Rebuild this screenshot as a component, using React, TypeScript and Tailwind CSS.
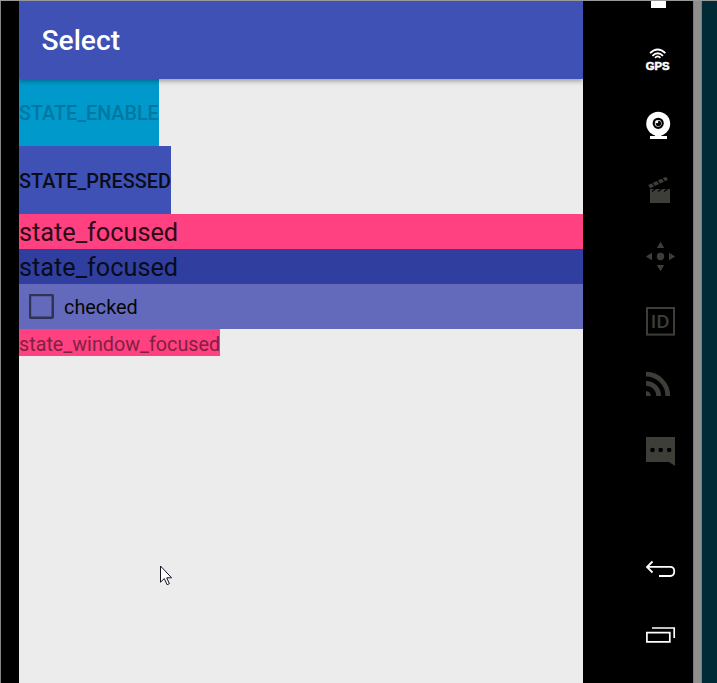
import type { ReactNode } from "react";

function Slot({ y, label, children }: { y: number; label: string; children: ReactNode }) {
  return (
    <button aria-label={label} className="block h-[65px] w-8 shrink-0">
      <svg width="32" height="65" viewBox={`645 ${y} 32 65`} className="block">
        {children}
      </svg>
    </button>
  );
}

function Sidebar() {
  return (
    <aside className="flex w-[110px] shrink-0 flex-col bg-black pl-[62px] text-[#3e3e39]">
      <div className="mb-[20px] ml-[6px] h-[7px] w-[15px] shrink-0 bg-white" />
      <Slot y={28} label="GPS">
        <g fill="none" stroke="#fff" strokeWidth="1.8">
          <path d="M650 53.2 Q657.7 45.8 665.4 53.2" />
          <path d="M652.4 55.8 Q657.7 50.6 663 55.8" />
          <path d="M655 57.8 Q657.7 55 660.4 57.8" />
        </g>
        <text x="645.7" y="70.2" textLength="24" lengthAdjust="spacingAndGlyphs" fill="#fff" stroke="#fff" strokeWidth="0.5" className="font-['Liberation_Sans',sans-serif] text-[10.8px] font-bold">GPS</text>
      </Slot>
      <Slot y={93} label="Camera">
        <circle cx="658.2" cy="123.8" r="12" fill="#fff" />
        <path d="M655 134h6.400v2h5.600v3h-17v-3h5z" fill="#fff" />
        <circle cx="658.2" cy="123.300" r="4.500" fill="#fff" stroke="#000" strokeWidth="2.200" />
        <circle cx="658.4" cy="123.500" r="2.700" fill="#000" />
        <circle cx="657" cy="122" r="1.300" fill="#fff" />
      </Slot>
      <Slot y={158} label="Video capture">
        <path d="M650 189h20v14h-20z" fill="currentColor" />
        <path d="M648.200 185L666 176.700l1.900 3L650.200 188.200z" fill="currentColor" />
        <path d="M651.500 182l3 4M656.500 179.600l3 4M661.500 177.300l3 4M652 191.600l3.500-2.600M658 191.600l3.500-2.600M664 191.600l3.500-2.600" stroke="#000" strokeWidth="1.200" />
      </Slot>
      <Slot y={223} label="Move">
        <g fill="currentColor">
          <circle cx="660.500" cy="256.500" r="3.700" />
          <path d="M660.500 241.700l3.700 6.300h-7.400zM660.500 271.300l3.700-6.300h-7.400zM645.800 256.500l6.200-3.700v7.400zM675.200 256.500l-6.200-3.700v7.400z" />
        </g>
      </Slot>
      <Slot y={288} label="Identifiers">
        <rect x="647" y="308" width="27" height="26.600" fill="none" stroke="currentColor" strokeWidth="2" />
        <text x="650.7" y="328" textLength="18.800" lengthAdjust="spacingAndGlyphs" fill="currentColor" stroke="currentColor" strokeWidth="0.200" className="font-['Open_Sans',sans-serif] text-[18px] font-semibold">ID</text>
      </Slot>
      <Slot y={353} label="Network">
        <g fill="none" stroke="currentColor" strokeWidth="4.700">
          <path d="M646 374.200A21.800 21.800 0 0 1 667.800 396" />
          <path d="M646 383.300A12.700 12.700 0 0 1 658.700 396" />
        </g>
        <path d="M646 391.200A4.800 4.800 0 0 1 650.800 396H646z" fill="currentColor" />
      </Slot>
      <Slot y={418} label="Messages">
        <path d="M646 437h29v29l-6-4h-23z" fill="currentColor" />
        <g fill="#000">
          <circle cx="652.500" cy="450" r="2.300" />
          <circle cx="660.700" cy="450" r="2.300" />
          <circle cx="669.200" cy="450" r="2.300" />
        </g>
      </Slot>
      <div className="h-[53px] shrink-0" />
      <Slot y={536} label="Back">
        <path d="M652.500 561.500L647 567l5.500 5.500M647 566.800h23.500a3.700 3.700 0 0 1 3.700 3.700v1.800a3.700 3.700 0 0 1-3.700 3.700h-11.500" fill="none" stroke="#fff" strokeWidth="1.800" />
      </Slot>
      <Slot y={601} label="Recent apps">
        <path d="M646.900 632.600h22.900v9.300h-22.900zM652 628h22.200v10" fill="none" stroke="#fff" strokeWidth="1.700" />
      </Slot>
    </aside>
  );
}

export default function App() {
  return (
    <div className="relative flex h-[683px] w-[717px] flex-col overflow-hidden bg-[#ececec] font-[Roboto,sans-serif]">
      <div className="h-px shrink-0 bg-[#999]" />
      <div className="flex min-h-0 flex-1">
        <div className="w-[19px] shrink-0 border-l border-[#858585] bg-black" />
        <main className="flex w-[564px] shrink-0 flex-col items-start bg-[#ececec]">
          <header className="z-10 flex h-[78px] w-full shrink-0 items-center bg-[#3f51b5] pl-[22.5px] pt-0.5 shadow-[0_2px_5px_rgba(0,0,0,0.35)] [clip-path:inset(0_0_-10px_0)]">
            <h1 className="text-[28.2px] font-medium leading-none text-white">Select</h1>
          </header>
          <button className="h-[67px] w-[140px] shrink-0 whitespace-nowrap bg-[#0099cc] pt-[3px] text-left text-[19.75px] font-medium text-[#0077a0]">STATE_ENABLE</button>
          <button className="h-[68px] w-[152.4px] shrink-0 whitespace-nowrap bg-[#3f51b5] pt-[3px] text-left text-[19.85px] font-medium text-[#090c19]">STATE_PRESSED</button>
          <div className="flex h-[35px] w-full shrink-0 items-center bg-[#ff4081] pt-[2px] text-[25.25px] leading-none text-[#2b0b17]">state_focused</div>
          <div className="flex h-[35px] w-full shrink-0 items-center bg-[#303f9f] pt-[2px] text-[25.25px] leading-none text-[#080b1a]">state_focused</div>
          <label className="flex h-[45px] w-full shrink-0 items-center bg-[#646abb] pl-[10px] text-[19.85px] leading-none text-[#06060a]">
            <svg className="mr-[10px] block" width="25" height="25" viewBox="0 0 25 25">
              <rect x="0.900" y="1" width="22.900" height="22.900" rx="1.500" fill="none" stroke="#303257" strokeWidth="2.600" />
            </svg>
            <span className="pt-[3px]">checked</span>
          </label>
          <div className="flex h-[27px] w-[201px] shrink-0 items-center whitespace-nowrap bg-[#ff4081] pt-[4px] text-[19.75px] leading-none text-[#82213f]">state_window_focused</div>
        </main>
        <Sidebar />
        <div className="w-[9px] shrink-0 border-x border-[#7c7c7c] bg-[#8e8e8e]" />
        <div className="flex-1 border-t border-[#222] bg-[#002b36]" />
      </div>
      <svg className="absolute left-[160px] top-[565px]" width="14" height="22" viewBox="0 0 14 22">
        <path d="M.5 1v16.200l3.800-3.700 2.800 6.200 2.300-1-2.700-5.900h4.900z" fill="#fff" stroke="#15151f" strokeWidth="1" />
      </svg>
    </div>
  );
}
